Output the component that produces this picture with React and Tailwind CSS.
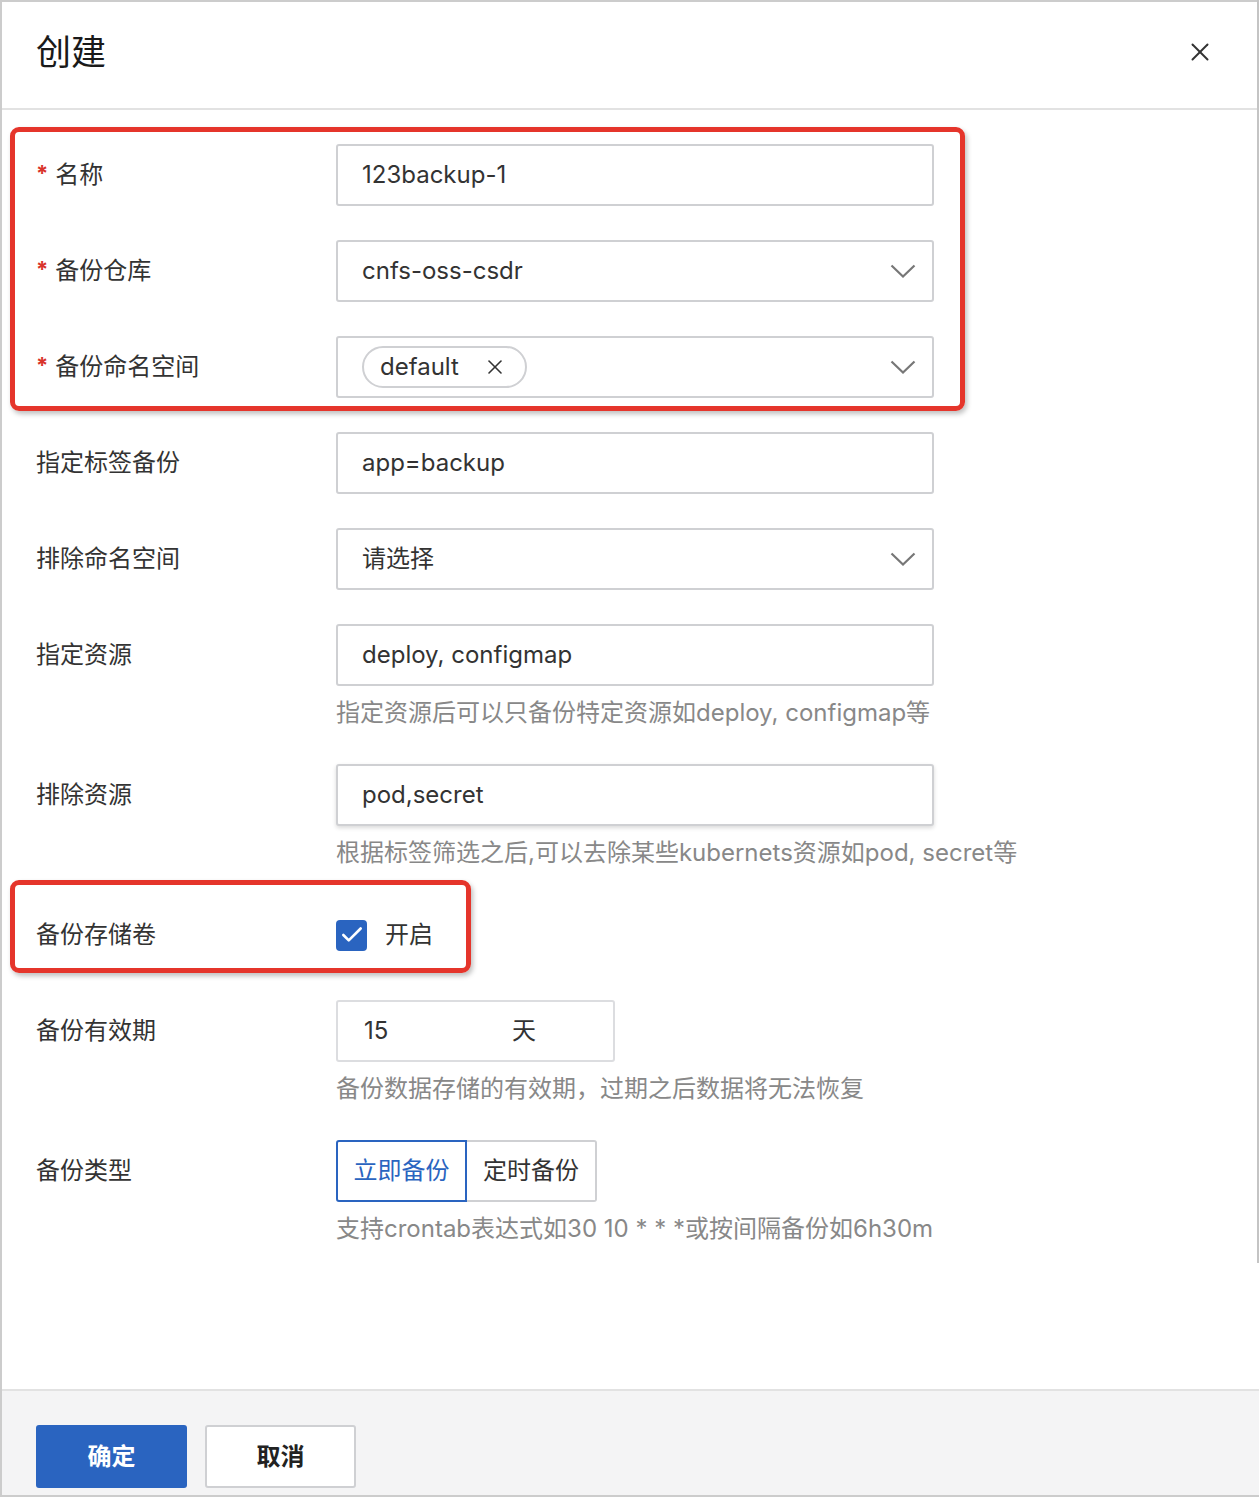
import { X, Check } from 'lucide-react';

const font = { fontFamily: 'Inter, "Noto Sans CJK SC", sans-serif' };

function Chevron() {
  return (
    <svg width="26" height="14" viewBox="0 0 26 14" fill="none" className="text-[#777]">
      <polyline points="1.5,1.5 13,12.5 24.5,1.5" stroke="currentColor" strokeWidth="2.2" />
    </svg>
  );
}

function Row({ label, required, children, help }) {
  return (
    <div className="flex">
      <div className="flex h-[62px] w-[300px] shrink-0 items-center text-[24px] text-[#333]">
        {required ? <span className="mr-[7px] mt-[-4px] text-[22px] font-bold text-[#d9342b]">*</span> : null}
        {label}
      </div>
      <div className="flex w-[598px] flex-col">
        {children}
        {help ? (
          <p className="mt-[10px] h-[34px] whitespace-nowrap text-[24px] leading-[34px] text-[#888]">{help}</p>
        ) : null}
      </div>
    </div>
  );
}

function TextBox({ value, shadow }) {
  return (
    <div
      className={`flex h-[62px] items-center rounded-[3px] border-2 border-[#cfd0d3] bg-white px-[24px] text-[24px] text-[#333] ${
        shadow ? 'shadow-[0_2px_4px_rgba(0,0,0,0.15)]' : ''
      }`}
    >
      {value}
    </div>
  );
}

function SelectBox({ children }) {
  return (
    <div className="flex h-[62px] items-center justify-between rounded-[3px] border-2 border-[#cfd0d3] bg-white pl-[24px] pr-[16px] text-[24px] text-[#333]">
      <div className="flex items-center">{children}</div>
      <Chevron />
    </div>
  );
}

function App() {
  return (
    <div className="relative h-[1497px] w-[1259px] bg-white" style={font}>
      <div className="flex h-[1497px] flex-col border-y-2 border-l-2 border-[#cccccc]">
        <header className="flex h-[108px] shrink-0 items-center justify-between border-b-2 border-[#e2e2e2] pb-[6px] pl-[34px] pr-[44px]">
          <h1 className="text-[35px] text-[#1a1a1a]">创建</h1>
          <X size={30} strokeWidth={1.6} className="text-[#333]" />
        </header>

        <main className="flex flex-1 flex-col gap-[34px] pl-[34px] pt-[34px]">
          <Row label="名称" required>
            <TextBox value="123backup-1" />
          </Row>
          <Row label="备份仓库" required>
            <SelectBox>cnfs-oss-csdr</SelectBox>
          </Row>
          <Row label="备份命名空间" required>
            <SelectBox>
              <span className="flex h-[42px] items-center gap-[24px] rounded-full border-2 border-[#cfd0d3] pl-[16px] pr-[18px]">
                default
                <X size={24} strokeWidth={1.6} className="text-[#333]" />
              </span>
            </SelectBox>
          </Row>
          <Row label="指定标签备份">
            <TextBox value="app=backup" />
          </Row>
          <Row label="排除命名空间">
            <SelectBox>请选择</SelectBox>
          </Row>
          <Row label="指定资源" help="指定资源后可以只备份特定资源如deploy, configmap等">
            <TextBox value="deploy, configmap" />
          </Row>
          <Row label="排除资源" help="根据标签筛选之后,可以去除某些kubernets资源如pod, secret等">
            <TextBox value="pod,secret" shadow />
          </Row>
          <Row label="备份存储卷">
            <div className="flex h-[62px] items-center gap-[18px] text-[24px] text-[#333]">
              <span className="flex h-[31px] w-[31px] items-center justify-center rounded-[4px] bg-[#2a64c0]">
                <Check size={26} strokeWidth={2.4} className="text-white" />
              </span>
              开启
            </div>
          </Row>
          <Row label="备份有效期" help="备份数据存储的有效期，过期之后数据将无法恢复">
            <div className="flex h-[62px] w-[279px] items-center rounded-[3px] border-2 border-[#dcdde0] pl-[26px] text-[24px] text-[#333]">
              <span className="w-[148px]">15</span>
              <span>天</span>
            </div>
          </Row>
          <Row label="备份类型" help="支持crontab表达式如30 10 * * *或按间隔备份如6h30m">
            <div className="flex h-[62px] text-[24px]">
              <span className="flex w-[131px] items-center justify-center rounded-l-[3px] border-2 border-[#2a64c0] text-[#2a64c0]">
                立即备份
              </span>
              <span className="flex w-[130px] items-center justify-center rounded-r-[3px] border-y-2 border-r-2 border-[#cfd0d3] text-[#333]">
                定时备份
              </span>
            </div>
          </Row>
        </main>

        <footer className="flex h-[106px] shrink-0 items-start gap-[18px] border-t-2 border-[#e2e2e2] bg-[#f4f4f5] pl-[34px] pt-[34px]">
          <button className="h-[63px] w-[151px] rounded-[3px] bg-[#2a64c0] text-[24px] font-bold text-white" type="button">
            确定
          </button>
          <button
            className="h-[63px] w-[151px] rounded-[3px] border-2 border-[#cfd0d3] bg-white text-[24px] font-bold text-[#222]"
            type="button"
          >
            取消
          </button>
        </footer>
      </div>

      {/* scrollbar edge */}
      <div className="absolute right-0 top-0 h-[1263px] w-[2px] bg-[#c4c4c4]" />

      {/* annotation boxes */}
      <div className="pointer-events-none absolute left-[10px] top-[127px] h-[284px] w-[955px] rounded-[9px] border-[5px] border-[#e5352b] shadow-[2px_3px_5px_rgba(0,0,0,0.25)]" />
      <div className="pointer-events-none absolute left-[10px] top-[880px] h-[93px] w-[461px] rounded-[9px] border-[5px] border-[#e5352b] shadow-[2px_3px_5px_rgba(0,0,0,0.25)]" />
    </div>
  );
}

export default App;
